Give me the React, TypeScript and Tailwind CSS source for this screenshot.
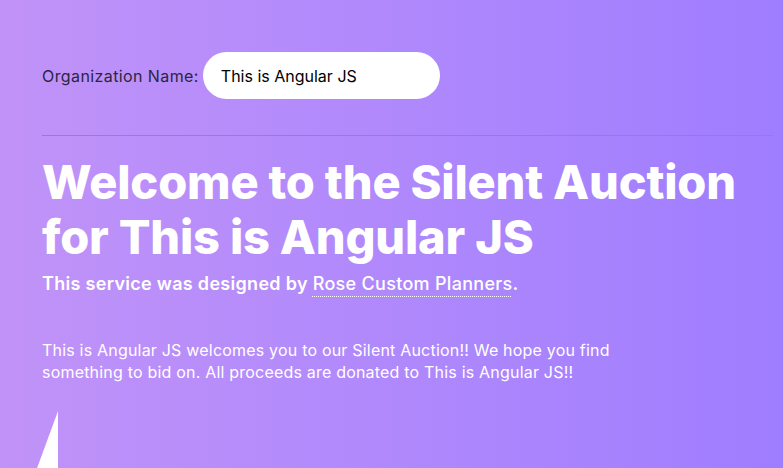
export default function App() {
  return (
    <div className="min-h-screen w-full overflow-hidden bg-linear-to-r from-[#c193f8] to-[#9f7dff] pl-[42px] pr-[10px] pt-[52px] font-['Inter',sans-serif]">
      <div className="flex items-center gap-[4px]">
        <label className="text-[16px] tracking-[0.4px] text-[#2b2540]">Organization Name:</label>
        <div className="flex h-[47px] w-[237px] items-center rounded-full bg-white pl-[18px] text-[16px] text-black">
          This is Angular JS
        </div>
      </div>

      <hr className="mt-[36px] border-t border-[#9a78e4]" />

      <h1 className="mt-[18px] text-[47px] font-extrabold leading-[55px] tracking-[-0.2px] text-white">
        Welcome to the Silent Auction
        <br />
        for This is Angular JS
      </h1>
      <p className="mt-[6px] text-[18px] font-semibold tracking-[0.3px] text-white">
        This service was designed by{" "}
        <a className="font-medium underline decoration-dotted decoration-1 underline-offset-[6px]">
          Rose Custom Planners
        </a>
        .
      </p>

      <p className="mt-[42px] max-w-[600px] text-[16px] leading-[22px] tracking-[0.2px] text-white">
        This is Angular JS welcomes you to our Silent Auction!! We hope you find something to bid on. All
        proceeds are donated to This is Angular JS!!
      </p>

      <svg className="mt-[28px] -ml-[6px]" width="24" height="60" viewBox="0 0 24 60">
        <polygon points="22,0 22,60 0,60" fill="white" />
      </svg>
    </div>
  );
}
